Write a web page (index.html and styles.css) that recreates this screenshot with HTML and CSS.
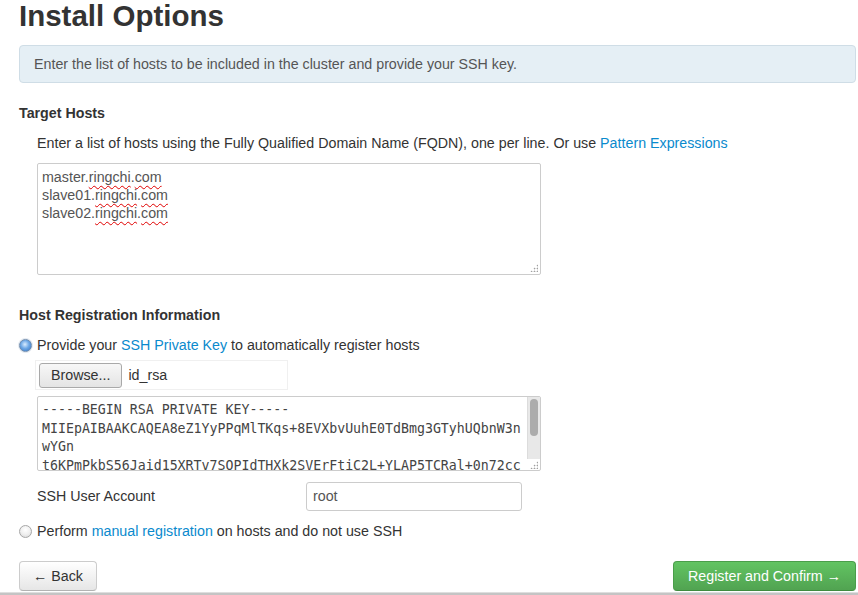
FILE: index.html
```html
<!DOCTYPE html>
<html>
<head>
<meta charset="utf-8">
<link rel="stylesheet" href="styles.css">
</head>
<body>
<div class="page">
  <h2 class="title">Install Options</h2>
  <div class="alert">Enter the list of hosts to be included in the cluster and provide your SSH key.</div>

  <h5 class="section">Target Hosts</h5>
  <p class="help">Enter a list of hosts using the Fully Qualified Domain Name (FQDN), one per line. Or use <a class="link" href="#">Pattern Expressions</a></p>
  <div class="textbox hosts"><div>master.<span class="sp">ringchi</span>.<span class="sp">com</span></div><div>slave01.<span class="sp">ringchi</span>.<span class="sp">com</span></div><div>slave02.<span class="sp">ringchi</span>.<span class="sp">com</span></div><span class="grip"></span></div>

  <h5 class="section reg">Host Registration Information</h5>
  <label class="radio-row"><span class="radio checked"></span><span>Provide your <a class="link" href="#">SSH Private Key</a> to automatically register hosts</span></label>

  <div class="ssh-block">
    <div class="file-input">
      <span class="browse">Browse...</span>
      <span class="file-name">id_rsa</span>
    </div>
    <div class="keybox-wrap">
      <div class="textbox keybox"><div>-----BEGIN RSA PRIVATE KEY-----</div><div>MIIEpAIBAAKCAQEA8eZ1YyPPqMlTKqs+8EVXbvUuhE0TdBmg3GTyhUQbnW3n</div><div>wYGn</div><div>t6KPmPkbS56Jaid15XRTv7SOPIdTHXk2SVErFtiC2L+YLAP5TCRal+0n72cc</div></div>
      <span class="scrollbar"><span class="thumb"></span></span>
      <span class="grip key-grip"></span>
    </div>
    <div class="user-row">
      <span class="user-label">SSH User Account</span>
      <span class="user-input">root</span>
    </div>
  </div>

  <label class="radio-row manual"><span class="radio"></span><span>Perform <a class="link" href="#">manual registration</a> on hosts and do not use SSH</span></label>

  <div class="actions">
    <a class="btn btn-back" href="#">&larr; Back</a>
    <a class="btn btn-success" href="#">Register and Confirm &rarr;</a>
  </div>
</div>
<div class="bottom-bar"></div>
</body>
</html>
```
FILE: styles.css
```css
html, body {
  margin: 0;
  padding: 0;
  background: #ffffff;
  overflow: hidden;
}
body {
  font-family: "Liberation Sans", Arial, sans-serif;
  font-size: 14.25px;
  line-height: 20px;
  color: #333333;
}
.page {
  padding: 0 2px 0 19px;
}
.title {
  margin: 0;
  font-size: 29.5px;
  line-height: 32px;
  font-weight: bold;
  color: #333333;
}
.alert {
  margin-top: 13px;
  padding: 8px 14px;
  background: #e5eff5;
  border: 1px solid #cfdde6;
  border-radius: 4px;
  color: #555555;
}
.section {
  margin: 20px 0 0;
  font-size: 14.25px;
  line-height: 20px;
  font-weight: bold;
  color: #333333;
}
.section.reg {
  margin-top: 30px;
}
.help {
  margin: 10px 0 0 18px;
  color: #333333;
}
.link {
  color: #0a8acd;
  text-decoration: none;
}
.textbox {
  position: relative;
  box-sizing: border-box;
  border: 1px solid #cccccc;
  border-radius: 2px;
  background: #ffffff;
  color: #555555;
  white-space: nowrap;
}
.hosts {
  margin: 10px 0 0 18px;
  width: 504px;
  height: 112px;
  padding: 4px 4px;
  font-size: 14.25px;
  line-height: 18px;
}
.sp {
  text-decoration: underline wavy #e00000;
  text-decoration-thickness: 1px;
  text-underline-offset: 3px;
  text-decoration-skip-ink: none;
}
.grip {
  position: absolute;
  right: 2px;
  bottom: 2px;
  width: 8px;
  height: 8px;
  background-image: radial-gradient(circle, #a0a0a0 0.8px, transparent 1.1px);
  background-size: 3px 3px;
  clip-path: polygon(100% 0, 100% 100%, 0 100%);
}
.radio-row {
  display: flex;
  align-items: center;
  gap: 5px;
  margin-top: 10px;
  height: 20px;
}
.radio {
  box-sizing: border-box;
  width: 13px;
  height: 13px;
  border-radius: 50%;
  border: 1px solid #a7a7a7;
  background: radial-gradient(circle at 50% 35%, #ffffff 0%, #f0f0f0 50%, #d6d6d6 100%);
  flex: none;
}
.radio.checked {
  border-color: #6f8cad;
  background: radial-gradient(circle at 45% 40%, #d9ecff 0%, #6ea8e6 45%, #2f6fc0 100%);
  box-shadow: 0 0 0 1px #e3e9f0;
}
.ssh-block {
  margin-left: 18px;
}
.file-input {
  display: flex;
  align-items: center;
  box-sizing: border-box;
  margin: 5px 0 0 -2px;
  width: 253px;
  height: 30px;
  padding: 0 0 0 3px;
  border: 1px solid #f0f0f0;
}
.browse {
  box-sizing: border-box;
  height: 25px;
  padding: 0 11px;
  line-height: 23px;
  border: 1px solid #a9a9a9;
  border-radius: 3px;
  background: linear-gradient(#f7f7f7, #e4e4e4);
  color: #333333;
}
.file-name {
  margin-left: 6px;
  color: #333333;
}
.keybox-wrap {
  position: relative;
  margin-top: 6px;
  width: 504px;
}
.keybox {
  width: 504px;
  height: 75px;
  padding: 4px 18px 0 4px;
  font-family: "DejaVu Sans Mono", "Liberation Mono", monospace;
  font-size: 13.25px;
  line-height: 18.7px;
  color: #444444;
}
.scrollbar {
  position: absolute;
  top: 1px;
  right: 1px;
  bottom: 12px;
  width: 13px;
  background: #e8e8e8;
  border-left: 1px solid #dcdcdc;
  box-sizing: border-box;
}
.thumb {
  position: absolute;
  top: 2px;
  left: 2px;
  width: 8px;
  height: 37px;
  border-radius: 4px;
  background: #acacac;
}
.key-grip {
  right: 3px;
  bottom: 2px;
}
.user-row {
  display: flex;
  align-items: center;
  margin-top: 10px;
  height: 30px;
}
.user-label {
  width: 269px;
  color: #333333;
}
.user-input {
  box-sizing: border-box;
  width: 216px;
  height: 29px;
  padding: 0 6px;
  line-height: 27px;
  border: 1px solid #cccccc;
  border-radius: 3px;
  color: #555555;
}
.radio-row.manual {
  margin-top: 10px;
}
.actions {
  display: flex;
  justify-content: space-between;
  margin-top: 20px;
}
.btn {
  box-sizing: border-box;
  height: 30px;
  line-height: 28px;
  padding: 0;
  border-radius: 4px;
  text-decoration: none;
  font-size: 14.25px;
  white-space: nowrap;
  text-align: center;
}
.btn-back {
  width: 78px;
  color: #333333;
  border: 1px solid #cccccc;
  border-bottom-color: #b3b3b3;
  background: linear-gradient(#ffffff, #e6e6e6);
}
.btn-success {
  width: 183px;
  color: #ffffff;
  border: 1px solid #4a9e4a;
  border-bottom-color: #3f8c3f;
  background: linear-gradient(#62c462, #51a351);
}
.bottom-bar {
  margin-top: 1px;
  height: 4px;
  background: #c4c4c4;
  border-top: 1px solid #dedede;
  box-sizing: border-box;
}
```
